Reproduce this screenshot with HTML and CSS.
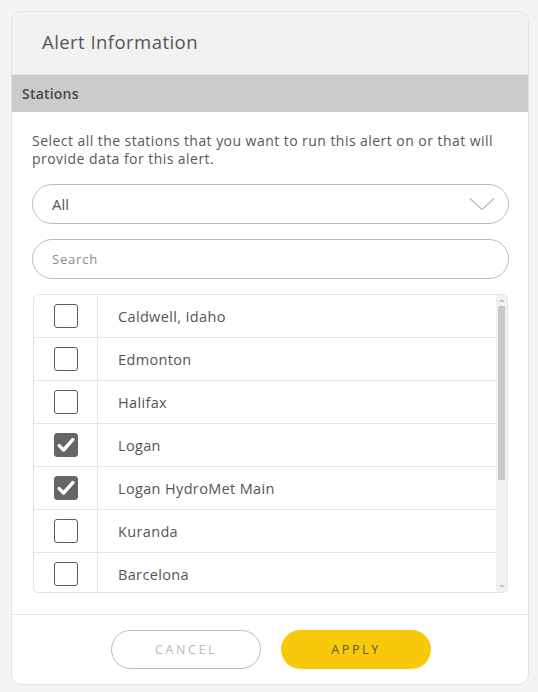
FILE: index.html
```html
<!DOCTYPE html>
<html>
<head>
<meta charset="utf-8">
<link rel="stylesheet" href="styles.css">
</head>
<body>
<div class="card">
  <div class="card-header">Alert Information</div>
  <div class="section-bar">Stations</div>
  <div class="card-body">
    <p class="desc">Select all the stations that you want to run this alert on or that will provide data for this alert.</p>
    <div class="select">
      <span>All</span>
      <svg class="chev" width="26" height="14" viewBox="0 0 26 14"><path d="M1 1.5 L13 12.5 L25 1.5" fill="none" stroke="#aeb4bb" stroke-width="1.1"/></svg>
    </div>
    <div class="search">Search</div>
    <div class="list">
      <div class="rows">
        <div class="row"><div class="cb-cell"><span class="cb"></span></div><div class="name">Caldwell, Idaho</div></div>
        <div class="row"><div class="cb-cell"><span class="cb"></span></div><div class="name">Edmonton</div></div>
        <div class="row"><div class="cb-cell"><span class="cb"></span></div><div class="name">Halifax</div></div>
        <div class="row"><div class="cb-cell"><span class="cb checked"><svg width="18" height="16" viewBox="0 0 18 16"><path d="M2.2 8.6 L6.6 13 L15.8 2.6" fill="none" stroke="#fff" stroke-width="3.4" stroke-linecap="round" stroke-linejoin="round"/></svg></span></div><div class="name">Logan</div></div>
        <div class="row"><div class="cb-cell"><span class="cb checked"><svg width="18" height="16" viewBox="0 0 18 16"><path d="M2.2 8.6 L6.6 13 L15.8 2.6" fill="none" stroke="#fff" stroke-width="3.4" stroke-linecap="round" stroke-linejoin="round"/></svg></span></div><div class="name">Logan HydroMet Main</div></div>
        <div class="row"><div class="cb-cell"><span class="cb"></span></div><div class="name">Kuranda</div></div>
        <div class="row"><div class="cb-cell"><span class="cb"></span></div><div class="name">Barcelona</div></div>
      </div>
      <div class="scrollbar">
        <span class="arrow up"></span>
        <div class="track"><div class="thumb"></div></div>
        <span class="arrow down"></span>
      </div>
    </div>
  </div>
  <div class="card-footer">
    <button class="btn btn-cancel">CANCEL</button>
    <button class="btn btn-apply">APPLY</button>
  </div>
</div>
</body>
</html>
```

FILE: styles.css
```css
* { box-sizing: border-box; }
html, body { margin: 0; padding: 0; }
body {
  background: #f4f4f4;
  padding: 11px 9px 0 11px;
  font-family: "Open Sans", "Liberation Sans", sans-serif;
  color: #555;
}
.card {
  width: 518px;
  height: 674px;
  background: #fff;
  border: 1px solid #e2e2e2;
  border-radius: 10px;
  overflow: hidden;
  display: flex;
  flex-direction: column;
}
.card-header {
  height: 63px;
  background: #f2f2f2;
  padding: 17px 0 0 30px;
  font-size: 18.5px;
  letter-spacing: 0.45px;
  color: #555;
  border-bottom: 1px solid #e8e8e8;
}
.section-bar {
  height: 37px;
  background: #cbcbcb;
  padding: 9px 0 0 10px;
  font-size: 14px;
  font-weight: 600;
  letter-spacing: 0.2px;
  color: #484848;
}
.card-body {
  padding: 20px 19px 0 20px;
  height: 503px;
  border-bottom: 1px solid #e2e2e2;
}
.desc {
  margin: 0;
  font-size: 14px;
  line-height: 18px;
  letter-spacing: 0.45px;
  color: #585858;
}
.select, .search {
  height: 40px;
  border: 1px solid #bdbdbd;
  border-radius: 20px;
  display: flex;
  align-items: center;
  padding-left: 19px;
}
.select {
  margin-top: 16px;
  justify-content: space-between;
  padding-right: 13px;
  font-size: 15px;
  color: #555;
}
.search {
  margin-top: 15px;
  font-size: 13px;
  letter-spacing: 0.8px;
  color: #8a8a8a;
}
.list {
  margin: 15px 1px 0 1px;
  height: 299px;
  border: 1px solid #e4e4e4;
  border-radius: 5px;
  display: flex;
  overflow: hidden;
}
.rows {
  flex: 1;
  overflow: hidden;
}
.row {
  display: flex;
  height: 43px;
  border-bottom: 1px solid #e6e6e6;
}
.cb-cell {
  width: 64px;
  flex: none;
  border-right: 1px solid #e6e6e6;
  display: flex;
  align-items: center;
  justify-content: center;
}
.cb {
  width: 24px;
  height: 24px;
  border: 1px solid #5a5a5a;
  border-radius: 3px;
  display: flex;
  align-items: center;
  justify-content: center;
}
.cb.checked {
  background: #666;
  border-color: #666;
}
.name {
  display: flex;
  align-items: center;
  padding-left: 20px;
  font-size: 14.5px;
  letter-spacing: 0.35px;
  color: #555;
}
.scrollbar {
  width: 11px;
  flex: none;
  background: #f1f1f1;
  display: flex;
  flex-direction: column;
  align-items: center;
}
.arrow {
  width: 0;
  height: 0;
  border-left: 3px solid transparent;
  border-right: 3px solid transparent;
  margin: 4px 0 4px;
}
.arrow.up { border-bottom: 3px solid #c4c4c4; }
.arrow.down { border-top: 3px solid #c4c4c4; }
.track {
  flex: 1;
  width: 100%;
  padding: 0 2px;
}
.thumb {
  height: 174px;
  background: #c8c8c8;
}
.card-footer {
  flex: 1;
  display: flex;
  justify-content: center;
  align-items: flex-start;
  gap: 20px;
  padding-top: 15px;
  padding-left: 2px;
}
.btn {
  width: 150px;
  height: 39px;
  border-radius: 20px;
  font-family: "Open Sans", "Liberation Sans", sans-serif;
  font-size: 12.5px;
  letter-spacing: 2.6px;
  padding: 0;
  cursor: pointer;
}
.btn-cancel {
  background: #fff;
  border: 1px solid #bcbcbc;
  color: #b3bac1;
}
.btn-apply {
  background: #f8c90a;
  border: none;
  color: #555;
}
```
